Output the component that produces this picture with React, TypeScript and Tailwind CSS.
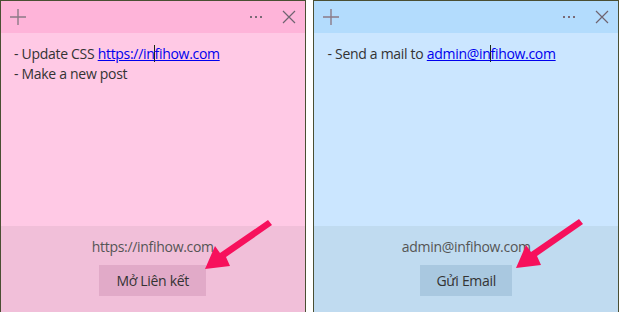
import React from "react";

type Note = {
  header: string;
  body: string;
  footer: string;
  button: string;
  lines: React.ReactNode[];
  caption: string;
  action: string;
  btnWidth: string;
};

function Arrow() {
  return (
    <svg
      className="absolute pointer-events-none"
      style={{ left: 0, top: 0 }}
      width="80"
      height="60"
      viewBox="0 0 80 60"
    >
      <path
        d="M70 3 L74 8 L28 40 L32 49 L7 52 L17 29 L22 36 Z"
        fill="#f7105c"
      />
    </svg>
  );
}

function Caret() {
  return <span className="inline-block w-px h-[17px] bg-[#1b2a10] align-[-3px] mx-[-0.5px]" />;
}

function StickyNote({ note }: { note: Note }) {
  return (
    <div className="relative flex flex-col h-[312px] border-l border-t border-r border-[#4a4f33]">
      <div className={`flex items-center h-[32px] ${note.header}`}>
        <svg width="18" height="18" viewBox="0 0 18 18" className="ml-[8px]">
          <path d="M9 1 V17 M1 9 H17" stroke="#8c7a86" strokeWidth="1.4" />
        </svg>
        <div className="flex-1" />
        <svg width="18" height="6" viewBox="0 0 18 6" className="mr-[15px]">
          <rect x="1" y="2" width="2" height="2" fill="#7a6a76" />
          <rect x="6" y="2" width="2" height="2" fill="#7a6a76" />
          <rect x="11" y="2" width="2" height="2" fill="#7a6a76" />
        </svg>
        <svg width="14" height="14" viewBox="0 0 14 14" className="mr-[9px]">
          <path d="M1 1 L13 13 M13 1 L1 13" stroke="#6f6470" strokeWidth="1.2" />
        </svg>
      </div>
      <div className={`flex-1 px-[13px] pt-[11px] text-[14px] leading-[20px] tracking-[-0.3px] text-[#333333] ${note.body}`}>
        {note.lines.map((l, i) => (
          <div key={i}>{l}</div>
        ))}
      </div>
      <div className={`h-[86px] flex flex-col items-center ${note.footer}`}>
        <div className="mt-[11px] text-[14px] leading-[20px] tracking-[-0.3px] text-[#555555]">{note.caption}</div>
        <div
          className={`mt-[8px] h-[31px] flex items-center justify-center text-[14px] tracking-[-0.3px] text-[#333333] ${note.button} ${note.btnWidth}`}
        >
          {note.action}
        </div>
      </div>
    </div>
  );
}

export default function App() {
  const pink: Note = {
    header: "bg-[#feb4d9]",
    body: "bg-[#ffc9e5]",
    footer: "bg-[#f1bfd9]",
    button: "bg-[#e1aac8]",
    btnWidth: "w-[107px]",
    caption: "https://infihow.com",
    action: "Mở Liên kết",
    lines: [
      <>
        - Update CSS{" "}
        <span className="text-[#0000ee] underline">
          https://in
          <Caret />
          fihow.com
        </span>
      </>,
      <>- Make a new post</>,
    ],
  };
  const blue: Note = {
    header: "bg-[#b3dcfd]",
    body: "bg-[#cbe6ff]",
    footer: "bg-[#c0dbf0]",
    button: "bg-[#a9c8e0]",
    btnWidth: "w-[92px]",
    caption: "admin@infihow.com",
    action: "Gửi Email",
    lines: [
      <>
        - Send a mail to{" "}
        <span className="text-[#0000ee] underline">
          admin@in
          <Caret />
          fihow.com
        </span>
      </>,
    ],
  };

  return (
    <div
      className="relative w-[619px] h-[312px] overflow-hidden bg-white flex"
      style={{ fontFamily: '"Open Sans", "Noto Sans", sans-serif' }}
    >
      <div className="w-[306px]">
        <StickyNote note={pink} />
      </div>
      <div className="w-[8px]" />
      <div className="w-[306px]">
        <StickyNote note={blue} />
      </div>
      <div className="absolute" style={{ left: 198, top: 217 }}>
        <Arrow />
      </div>
      <div className="absolute" style={{ left: 509, top: 216 }}>
        <Arrow />
      </div>
    </div>
  );
}
